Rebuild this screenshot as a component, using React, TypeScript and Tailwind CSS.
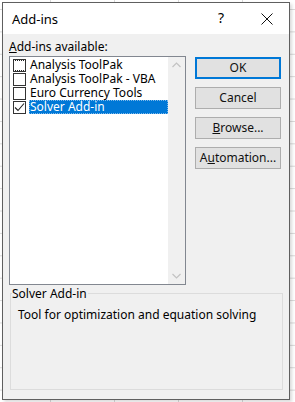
import React from "react";

const font = { fontFamily: '"Segoe UI", "Noto Sans", "Open Sans", sans-serif' };

function Check({ checked, focus }: { checked?: boolean; focus?: boolean }) {
  return (
    <div className="relative shrink-0">
      <div className="w-[13px] h-[13px] bg-white border border-[#333333] flex items-center justify-center">
        {checked && (
          <svg width="11" height="11" viewBox="0 0 11 11">
            <path d="M1 5.5 L4 8.5 L10 1.5" fill="none" stroke="#222" strokeWidth="1.1" />
          </svg>
        )}
      </div>
      {focus && (
        <>
          <div className="absolute left-0 right-0 top-[1px] border-t border-dotted border-[#222]" />
          <div className="absolute left-0 right-0 bottom-[1px] border-t border-dotted border-[#222]" />
        </>
      )}
    </div>
  );
}

const items = [
  { name: "Analysis ToolPak", checked: false, focus: true },
  { name: "Analysis ToolPak - VBA", checked: false },
  { name: "Euro Currency Tools", checked: false },
  { name: "Solver Add-in", checked: true, selected: true },
];

function Btn({ children, primary }: { children: React.ReactNode; primary?: boolean }) {
  return (
    <div
      className={
        "w-[86px] h-[22px] flex items-center justify-center text-[12px] leading-[14px] text-[#111] bg-[#e1e1e1] " +
        (primary ? "border-2 border-[#0078d7]" : "border border-[#adadad]")
      }
    >
      {children}
    </div>
  );
}

export default function App() {
  return (
    <div
      className="w-[295px] h-[402px] overflow-hidden bg-white pt-[2px] pl-[2px] bg-[linear-gradient(to_right,#d9d9d9_1px,transparent_1px),linear-gradient(to_bottom,#d9d9d9_1px,transparent_1px)] bg-[size:64px_22.4px] bg-[position:50px_9px]"
      style={font}
    >
      <div className="w-[288px] h-[398px] border border-[#5f5f5f] bg-[#f0f0f0] flex flex-col shadow-[2px_2px_3px_rgba(0,0,0,0.15)]">
        <div className="h-[31px] bg-white flex items-center relative shrink-0">
          <span className="ml-[9px] text-[13px] leading-[16px] text-black">Add-ins</span>
          <span className="absolute left-[215px] top-[7px] text-[14px] leading-[16px] text-black">?</span>
          <svg className="absolute left-[258px] top-[10px]" width="12" height="12" viewBox="0 0 12 12">
            <path d="M0.5 0.5 L11.5 11.5 M11.5 0.5 L0.5 11.5" stroke="#111" strokeWidth="1" />
          </svg>
        </div>
        <div className="pl-[6px] pt-[6px] text-[12px] leading-[14px] text-black">
          <span className="underline">A</span>dd-ins available:
        </div>
        <div className="flex pl-[6px] pt-[2px]">
          <div className="w-[177px] h-[229px] border border-[#828790] bg-white flex">
            <div className="flex-1 pt-[1px] pl-[3px]">
              {items.map((it) => (
                <div key={it.name} className="h-[14px] flex items-center">
                  <Check checked={it.checked} focus={it.focus} />
                  <span
                    className={
                      "ml-[3px] h-[14px] leading-[14px] text-[12px] pl-[1px] " +
                      (it.selected
                        ? "bg-[#0078d7] text-white w-[139px] outline outline-1 outline-dotted outline-[#7fb9ea] -outline-offset-1"
                        : "text-black")
                    }
                  >
                    {it.name}
                  </span>
                </div>
              ))}
            </div>
            <div className="w-[17px] bg-[#f0f0f0] flex flex-col items-center justify-between py-[5px]">
              <svg width="9" height="6" viewBox="0 0 9 6">
                <path d="M0.5 5 L4.5 1 L8.5 5" fill="none" stroke="#c2c2c2" strokeWidth="1.2" />
              </svg>
              <svg width="9" height="6" viewBox="0 0 9 6">
                <path d="M0.5 1 L4.5 5 L8.5 1" fill="none" stroke="#c2c2c2" strokeWidth="1.2" />
              </svg>
            </div>
          </div>
          <div className="ml-[9px] flex flex-col gap-[8px] pt-[1px]">
            <Btn primary>OK</Btn>
            <Btn>Cancel</Btn>
            <Btn>
              <span><span className="underline">B</span>rowse...</span>
            </Btn>
            <Btn>
              <span>A<span className="underline">u</span>tomation...</span>
            </Btn>
          </div>
        </div>
        <div className="ml-[7px] mt-[8px] w-[273px] h-[97px] border border-[#dcdcdc] relative">
          <span className="absolute left-[1px] top-[-7px] bg-[#f0f0f0] pr-[1px] text-[12px] leading-[14px] text-black">
            Solver Add-in
          </span>
          <div className="pl-[7px] pt-[14px] text-[12px] leading-[14px] text-black">
            Tool for optimization and equation solving
          </div>
        </div>
      </div>
    </div>
  );
}
